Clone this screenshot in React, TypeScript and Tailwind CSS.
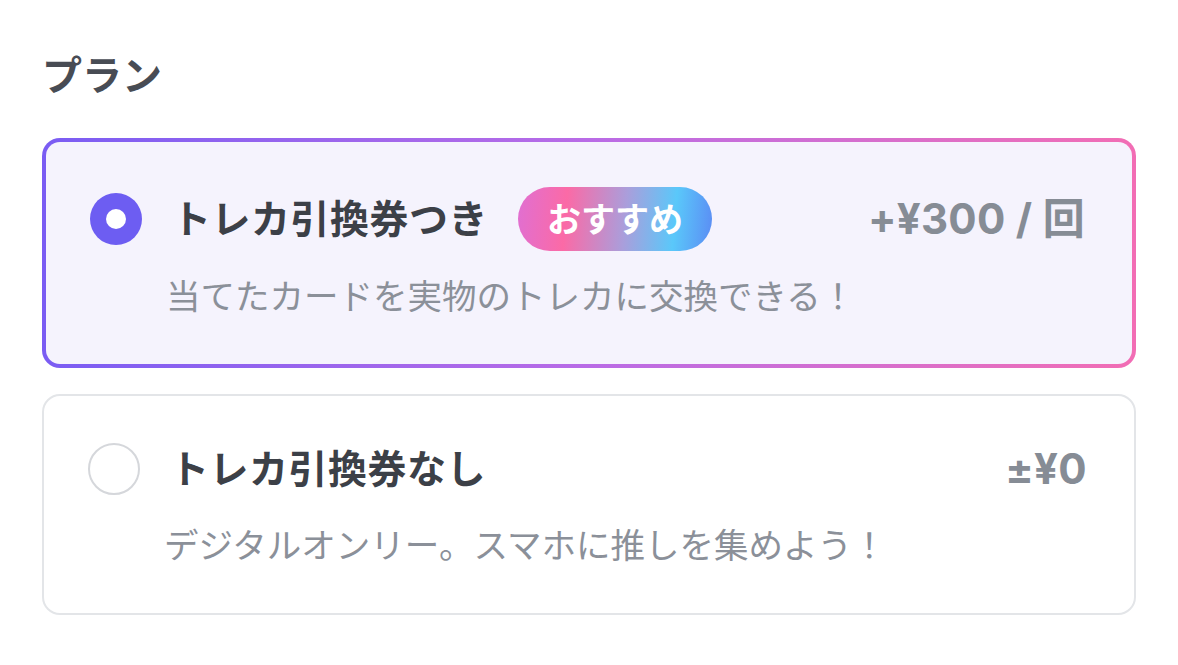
import { ReactNode } from 'react';

const font = { fontFamily: 'Inter, "Noto Sans CJK JP", sans-serif' };

type PlanProps = {
  selected: boolean;
  title: string;
  price: string;
  desc: string;
  badge?: ReactNode;
};

function Radio({ selected }: { selected: boolean }) {
  if (selected) {
    return (
      <div className="w-[52px] h-[52px] shrink-0 rounded-full bg-[#6d5df2] flex items-center justify-center">
        <div className="w-5 h-5 rounded-full bg-white" />
      </div>
    );
  }
  return <div className="w-[52px] h-[52px] shrink-0 rounded-full border-2 border-[#d5d7db] bg-white" />;
}

function PlanBody({ selected, title, price, desc, badge }: PlanProps) {
  return (
    <div className="pt-[45px] pb-[42px] pl-[44px] pr-[47px]">
      <div className={`flex items-center ${selected ? 'h-16' : 'h-14'}`}>
        <Radio selected={selected} />
        <div className="ml-[30px] text-[39px] leading-[56px] font-bold text-[#3c4047] tracking-[0.5px]">{title}</div>
        {badge}
        <div className="ml-auto text-[42px] leading-[56px] font-bold text-[#868c95] tracking-[0.3px]">{price}</div>
      </div>
      <div className={`${selected ? 'mt-5' : 'mt-[23px]'} ml-[76px] text-[34.5px] leading-[51px] text-[#8b9099]`}>{desc}</div>
    </div>
  );
}

export default function App() {
  return (
    <div className="min-h-[665px] bg-white px-[42px] pt-[48px]" style={font}>
      <h2 className="text-[40px] leading-[56px] font-bold text-[#484c54] mb-[34px]">プラン</h2>

      {/* おすすめプラン */}
      <div className="rounded-[18px] p-1 bg-gradient-to-r from-[#7a5cf3] via-[#b96be6] to-[#f26db4]">
        <div className="rounded-[14px] bg-[#f5f3fd]">
          <PlanBody
            selected
            title="トレカ引換券つき"
            price="+¥300 / 回"
            desc="当てたカードを実物のトレカに交換できる！"
            badge={
              <span className="ml-[30px] h-16 px-[29px] rounded-full flex items-center text-white text-[34px] font-bold bg-[linear-gradient(95deg,#e06fd2_0%,#fb6aa6_25%,#aa9edb_55%,#5ac8fa_80%,#5b8cf4_100%)]">
                おすすめ
              </span>
            }
          />
        </div>
      </div>

      <div className="mt-[26px] rounded-[18px] border-2 border-[#e3e5e8] bg-white">
        <PlanBody
          selected={false}
          title="トレカ引換券なし"
          price="±¥0"
          desc="デジタルオンリー。スマホに推しを集めよう！"
        />
      </div>
    </div>
  );
}
